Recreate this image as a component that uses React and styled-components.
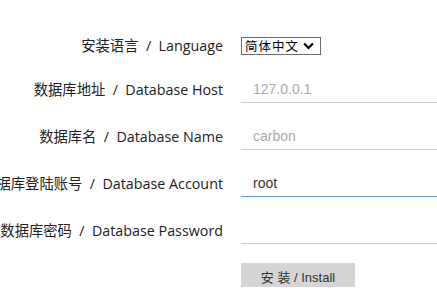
import React from 'react'
import styled, { createGlobalStyle } from 'styled-components'

const GlobalStyle = createGlobalStyle`
  html, body {
    margin: 0;
    padding: 0;
    background: #fff;
    overflow: hidden;
  }
  body {
    font-family: "Open Sans", "Noto Sans CJK SC", sans-serif;
  }
`

const fields = [
  { cn: '数据库地址', en: 'Database Host', placeholder: '127.0.0.1' },
  { cn: '数据库名', en: 'Database Name', placeholder: 'carbon' },
  { cn: '数据库登陆账号', en: 'Database Account', value: 'root', active: true },
  { cn: '数据库密码', en: 'Database Password', type: 'password' }
]

export default function App() {
  return (
    <>
      <GlobalStyle />
      <Form>
        <Row>
          <Label $shift={-2}>安装语言&nbsp;&nbsp;/&nbsp;&nbsp;Language</Label>
          <SelectWrap>
            <Select defaultValue="zh">
              <option value="zh">简体中文</option>
              <option value="en">English</option>
            </Select>
            <Chevron viewBox="0 0 12 8" aria-hidden="true">
              <path d="M1.2 1.3 L6 6.2 L10.8 1.3" />
            </Chevron>
          </SelectWrap>
        </Row>
        {fields.map(f => (
          <Row key={f.en}>
            <Label $shift={3}>{f.cn}&nbsp;&nbsp;/&nbsp;&nbsp;{f.en}</Label>
            <Input
              type={f.type || 'text'}
              placeholder={f.placeholder}
              defaultValue={f.value}
              $active={f.active}
            />
          </Row>
        ))}
        <Row>
          <span />
          <Button type="button">安 装 / Install</Button>
        </Row>
      </Form>
    </>
  )
}

const Form = styled.form`
  display: grid;
  grid-template-columns: 223px 1fr;
  grid-template-rows: 18px repeat(4, 30px) 26px;
  column-gap: 18px;
  row-gap: 17px;
  padding-top: 38px;
  margin: 0;
`

const Row = styled.div`
  display: contents;
`

const Label = styled.label`
  display: flex;
  justify-content: flex-end;
  align-self: center;
  white-space: nowrap;
  font-size: 14.3px;
  color: #222;
  line-height: 18px;
  height: 18px;
  margin-top: ${p => p.$shift || 0}px;
`

const SelectWrap = styled.div`
  position: relative;
  width: 80px;
  height: 18px;
  margin-top: -1px;
`

const Select = styled.select`
  appearance: none;
  display: block;
  width: 80px;
  height: 18px;
  margin: 0;
  padding: 0 0 0 3px;
  box-sizing: border-box;
  border: 1px solid #6d6d6d;
  border-radius: 0;
  background: #fff;
  font-family: "Noto Sans CJK SC", sans-serif;
  font-size: 12.5px;
  letter-spacing: 1px;
  line-height: 16px;
  color: #000;
  outline: none;
`

const Chevron = styled.svg`
  position: absolute;
  right: 7px;
  top: 5px;
  width: 11px;
  height: 8px;
  fill: none;
  stroke: #000;
  stroke-width: 2.2;
  pointer-events: none;
`

const Input = styled.input`
  width: 100%;
  height: 30px;
  box-sizing: border-box;
  margin: 0;
  padding: 2px 12px 0;
  border: none;
  border-bottom: 1px solid ${p => (p.$active ? '#5d9fb6' : '#cbcbcb')};
  background: #fff;
  font-family: "Liberation Sans", Arial, sans-serif;
  font-size: 14px;
  color: #333;
  outline: none;
  &::placeholder {
    color: #aaa;
  }
`

const Button = styled.button`
  width: 114px;
  height: 26px;
  margin: 2px 0 0;
  padding: 0;
  border: none;
  border-radius: 0;
  background: #d5d5d5;
  font-family: "Liberation Sans", "Noto Sans CJK SC", sans-serif;
  font-size: 13px;
  color: #333;
  cursor: pointer;
`
